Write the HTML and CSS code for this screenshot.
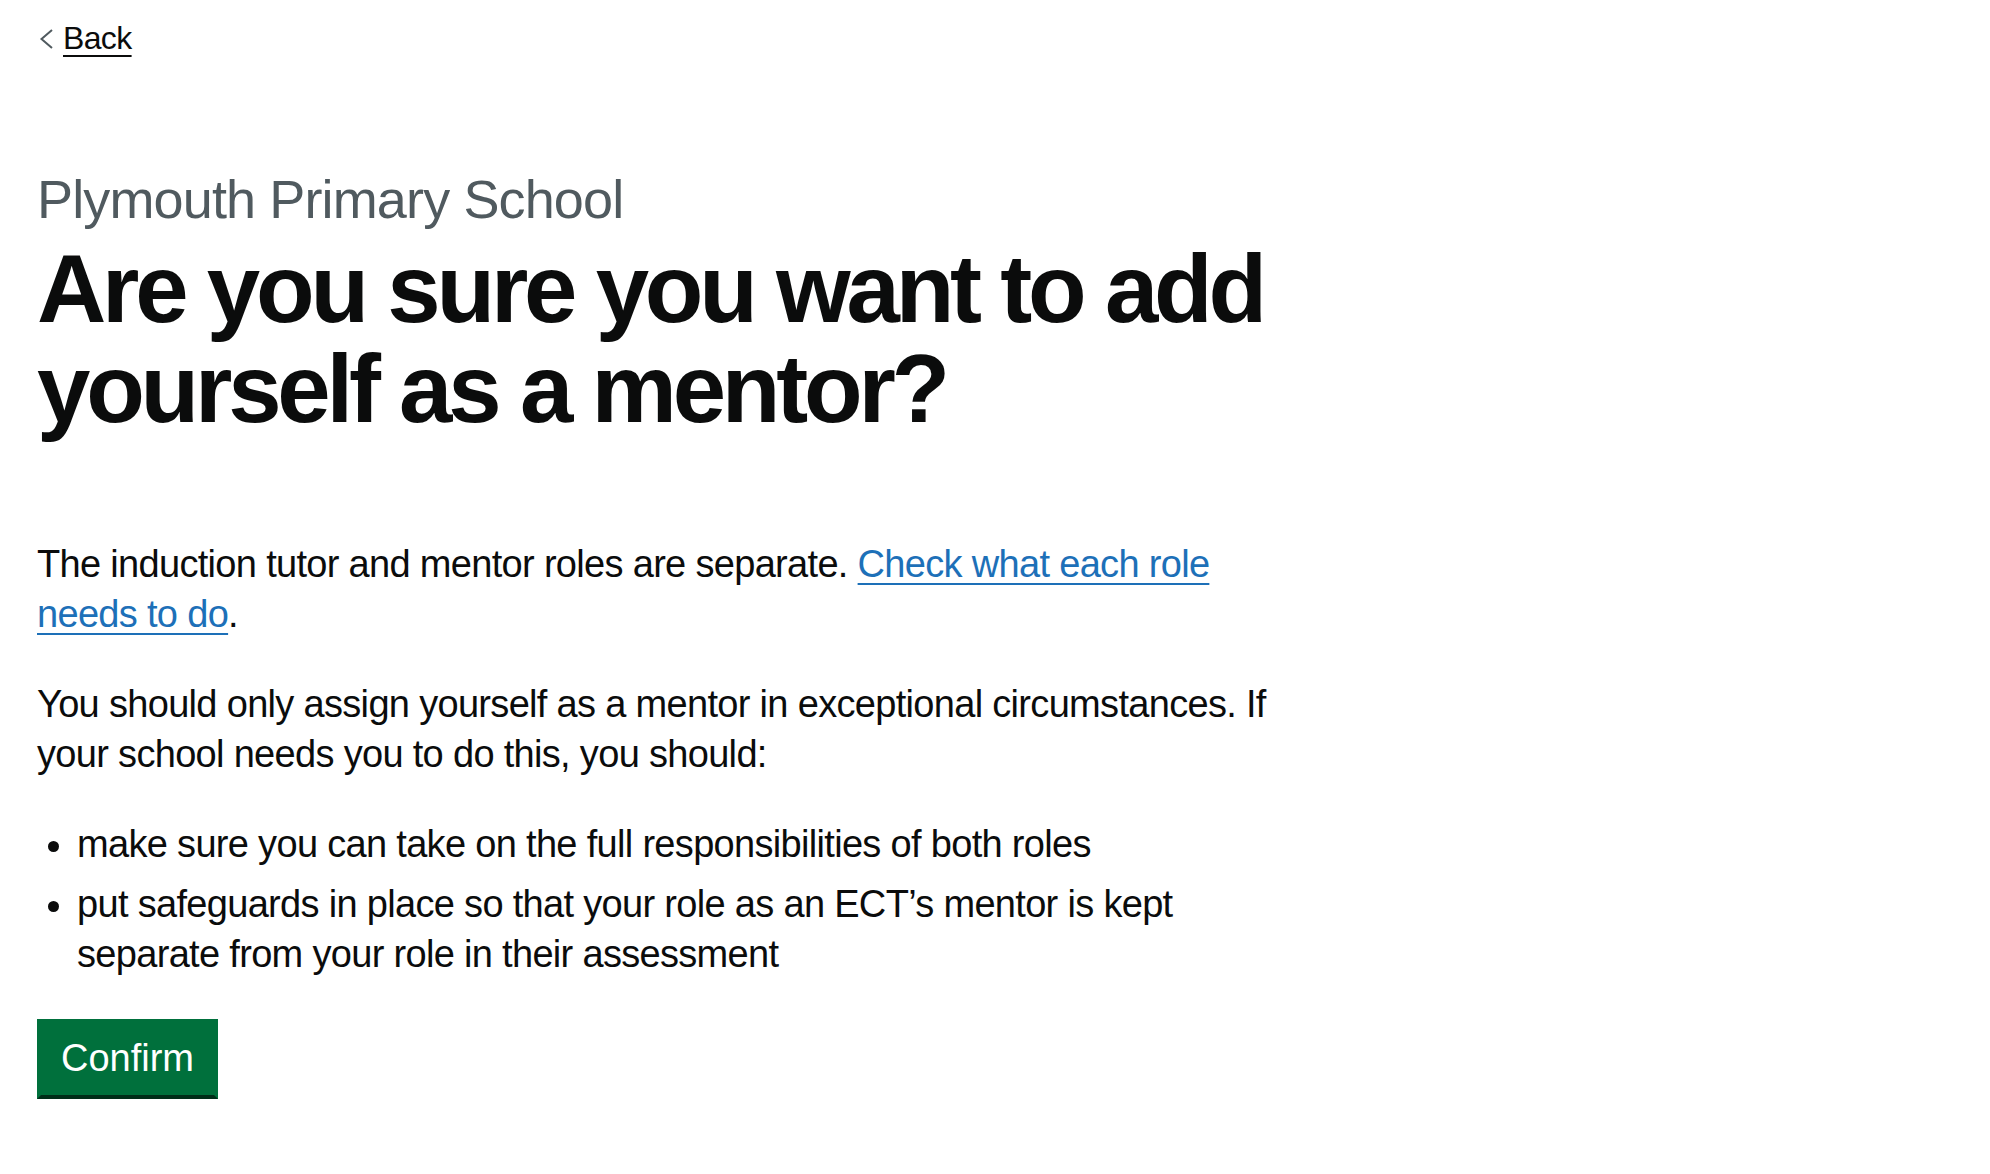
FILE: index.html
```html
<!DOCTYPE html>
<html lang="en">
<head>
<meta charset="utf-8">
<title>Are you sure you want to add yourself as a mentor?</title>
<link rel="stylesheet" href="styles.css">
</head>
<body>
<div class="page">
  <nav class="top-nav">
    <a class="back-link" href="#">
      <svg class="back-icon" width="16" height="24" viewBox="0 0 16 24" aria-hidden="true"><polyline points="15,4 4.5,13 15,22" fill="none" stroke="#505a5f" stroke-width="2"/></svg>
      <span class="back-text">Back</span>
    </a>
  </nav>
  <main class="main">
    <div class="column">
      <span class="caption">Plymouth Primary School</span>
      <h1 class="heading">Are you sure you want to add yourself as a mentor?</h1>
      <p class="body-text">The induction tutor and mentor roles are separate. <a class="link" href="#">Check what each role needs to do</a>.</p>
      <p class="body-text">You should only assign yourself as a mentor in exceptional circumstances. If your school needs you to do this, you should:</p>
      <ul class="bullet-list">
        <li>make sure you can take on the full responsibilities of both roles</li>
        <li>put safeguards in place so that your role as an ECT’s mentor is kept separate from your role in their assessment</li>
      </ul>
      <button class="button" type="button">Confirm</button>
    </div>
  </main>
</div>
</body>
</html>
```
FILE: styles.css
```css
html, body {
  margin: 0;
  padding: 0;
  background: #ffffff;
}
body {
  font-family: "Liberation Sans", Arial, sans-serif;
  color: #0b0c0c;
}
.page {
  padding-left: 37px;
}
.top-nav {
  display: flex;
  padding-top: 18px;
}
.back-link {
  display: inline-flex;
  align-items: center;
  gap: 10px;
  font-size: 32px;
  line-height: 40px;
  color: #0b0c0c;
  text-decoration: none;
  letter-spacing: -0.02em;
}
.back-icon {
  display: block;
  flex: none;
}
.back-text {
  text-decoration: underline;
  text-decoration-thickness: 2px;
  text-underline-offset: 6px;
}
.main {
  padding-top: 111px;
}
.column {
  max-width: 1250px;
}
.caption {
  display: block;
  font-size: 54px;
  line-height: 60px;
  color: #505a5f;
  margin: 0 0 10px;
  letter-spacing: -0.016em;
}
.heading {
  font-size: 96px;
  line-height: 100px;
  font-weight: 700;
  margin: 0 0 100px;
  letter-spacing: -0.044em;
}
.body-text {
  font-size: 38px;
  line-height: 50px;
  margin: 0 0 40px;
  letter-spacing: -0.018em;
}
.link {
  color: #1d70b8;
  text-decoration: underline;
  text-decoration-thickness: 2px;
  text-underline-offset: 6px;
}
.bullet-list {
  font-size: 38px;
  line-height: 50px;
  margin: 0 0 40px;
  padding-left: 40px;
  list-style-type: disc;
  letter-spacing: -0.018em;
}
.bullet-list li {
  margin-bottom: 10px;
}
.button {
  display: inline-block;
  font-family: "Liberation Sans", Arial, sans-serif;
  font-size: 38px;
  line-height: 38px;
  color: #ffffff;
  background: #00703c;
  border: 4px solid #00703c;
  border-bottom: 4px solid #002d18;
  border-radius: 0;
  padding: 16px 20px 18px;
  margin: 0;
  cursor: pointer;
}
```
